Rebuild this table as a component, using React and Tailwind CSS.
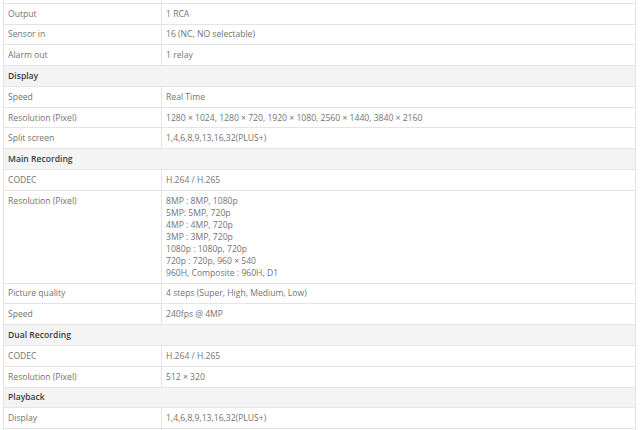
const sections = [
  {
    title: null,
    rows: [
      ['\u00a0', '\u00a0'],
      ['Output', '1 RCA'],
      ['Sensor in', '16 (NC, NO selectable)'],
      ['Alarm out', '1 relay'],
    ],
  },
  {
    title: 'Display',
    rows: [
      ['Speed', 'Real Time'],
      ['Resolution (Pixel)', '1280 × 1024, 1280 × 720, 1920 × 1080, 2560 × 1440, 3840 × 2160'],
      ['Split screen', '1,4,6,8,9,13,16,32(PLUS+)'],
    ],
  },
  {
    title: 'Main Recording',
    rows: [
      ['CODEC', 'H.264 / H.265'],
      [
        'Resolution (Pixel)',
        ['8MP : 8MP, 1080p', '5MP: 5MP, 720p', '4MP : 4MP, 720p', '3MP : 3MP, 720p', '1080p : 1080p, 720p', '720p : 720p, 960 × 540', '960H, Composite : 960H, D1'],
      ],
      ['Picture quality', '4 steps (Super, High, Medium, Low)'],
      ['Speed', '240fps @ 4MP'],
    ],
  },
  {
    title: 'Dual Recording',
    rows: [
      ['CODEC', 'H.264 / H.265'],
      ['Resolution (Pixel)', '512 × 320'],
    ],
  },
  {
    title: 'Playback',
    rows: [
      ['Display', '1,4,6,8,9,13,16,32(PLUS+)'],
      ['\u00a0', '\u00a0'],
    ],
  },
]

export default function App() {
  return (
    <div className="w-[640px] h-[430px] overflow-hidden bg-white font-['Open_Sans',sans-serif] text-[8.6px] leading-[12px]">
      <table className="ml-[3px] mt-[-18px] w-[633px] border-collapse">
        <colgroup>
          <col className="w-[158px]" />
          <col />
        </colgroup>
        <tbody>
          {sections.map((s, i) => (
            <>
              {s.title && (
                <tr key={'h' + i} className="bg-[#f4f4f4]">
                  <td colSpan={2} className="border border-[#e4e4e4] px-[4px] py-[3.9px] font-semibold text-[#3c3c3c]">
                    {s.title}
                  </td>
                </tr>
              )}
              {s.rows.map(([label, value], j) => (
                <tr key={i + '-' + j}>
                  <td className="border border-[#e4e4e4] px-[4px] py-[3.9px] align-top text-[#737373]">{label}</td>
                  <td className="border border-[#e4e4e4] px-[4px] py-[3.9px] align-top text-[#737373]">
                    {Array.isArray(value) ? value.map((v) => <div key={v}>{v}</div>) : value}
                  </td>
                </tr>
              ))}
            </>
          ))}
        </tbody>
      </table>
    </div>
  )
}
